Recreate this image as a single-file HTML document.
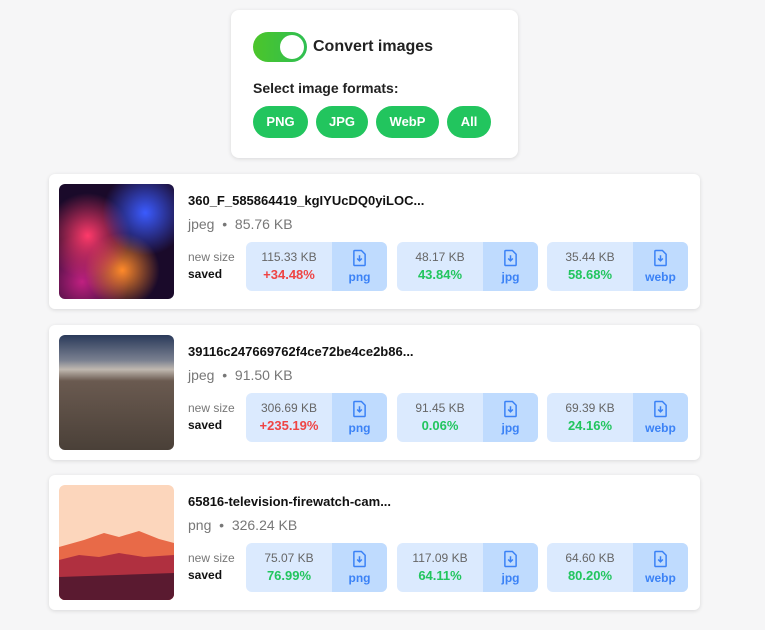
<!DOCTYPE html>
<html><head><style>
*{box-sizing:border-box;margin:0;padding:0}
body{width:765px;height:630px;background:#f6f6f7;font-family:"Liberation Sans",Arial,sans-serif;position:relative;overflow:hidden}
.panel{position:absolute;left:231px;top:10px;width:287px;height:148px;background:#fff;border-radius:8px;box-shadow:0 1px 4px rgba(0,0,0,.12)}
.tog{position:absolute;left:22px;top:22px;width:54px;height:30px;border-radius:15px;background:linear-gradient(90deg,#4cc52a,#2fbf52)}
.tog:after{content:"";position:absolute;right:3px;top:3px;width:24px;height:24px;border-radius:50%;background:#fff}
.lbl{position:absolute;left:82px;top:28px;font-size:16px;font-weight:bold;color:#222}
.sel{position:absolute;left:22px;top:70px;font-size:14px;font-weight:bold;color:#222}
.btn{position:absolute;top:96px;height:32px;border-radius:16px;background:#22c55e;color:#fff;font-size:13px;font-weight:bold;text-align:center;line-height:32px}
.card{position:absolute;left:49px;width:651px;height:135px;background:#fff;border-radius:6px;box-shadow:0 1px 4px rgba(0,0,0,.12)}
.img{position:absolute;left:10px;top:10px;width:115px;height:115px;border-radius:6px;overflow:hidden}
.t{position:absolute;left:139px;top:19px;font-size:13px;font-weight:bold;color:#111}
.m{position:absolute;left:139px;top:42px;font-size:14px;color:#777}
.ns{position:absolute;left:139px;top:76px;font-size:12px;color:#777}
.sv{position:absolute;left:139px;top:93px;font-size:12px;font-weight:bold;color:#111}
.box{position:absolute;top:68px;width:141px;height:49px;border-radius:6px;background:#dbeafe;overflow:hidden}
.box .a{position:absolute;left:0;top:8px;width:86px;text-align:center;font-size:12px;color:#666}
.box .b{position:absolute;left:0;top:25px;width:86px;text-align:center;font-size:13px;font-weight:bold}
.box .r{position:absolute;left:86px;top:0;width:55px;height:49px;background:#bfdbfe;text-align:center}
.box .r svg{position:absolute;left:20px;top:7px}
.box .r span{position:absolute;left:0;width:55px;top:28px;font-size:12px;font-weight:bold;color:#3b82f6}
.g{color:#22c55e}.red{color:#ef4444}
</style></head><body>
<div class="panel"><div class="tog"></div><div class="lbl">Convert images</div><div class="sel">Select image formats:</div>
<div class="btn" style="left:22px;width:55px">PNG</div><div class="btn" style="left:85px;width:52px">JPG</div><div class="btn" style="left:145px;width:63px">WebP</div><div class="btn" style="left:216px;width:44px">All</div></div>

<svg width="0" height="0" style="position:absolute"><defs><symbol id="ic" viewBox="0 0 16 18"><path d="M3 1h7l4 4v11a1 1 0 0 1-1 1H3a1 1 0 0 1-1-1V2a1 1 0 0 1 1-1z" fill="none" stroke="#3b82f6" stroke-width="1.6"/><path d="M8 6v6M5.5 9.5L8 12l2.5-2.5" fill="none" stroke="#3b82f6" stroke-width="1.6"/></symbol></defs></svg>

<div class="card" style="top:174px"><div class="img" style="background:radial-gradient(circle at 75% 25%,#3b5bff,transparent 35%),radial-gradient(circle at 25% 45%,#ff3a6a,transparent 40%),radial-gradient(circle at 55% 75%,#ff8a2a,transparent 35%),radial-gradient(circle at 20% 85%,#c02080,transparent 35%),#1a0a2a"></div>
<div class="t">360_F_585864419_kgIYUcDQ0yiLOC...</div><div class="m">jpeg &nbsp;•&nbsp; 85.76 KB</div><div class="ns">new size</div><div class="sv">saved</div>
<div class="box" style="left:197px"><div class="a">115.33 KB</div><div class="b red">+34.48%</div><div class="r"><svg width="15" height="18"><use href="#ic"/></svg><span>png</span></div></div>
<div class="box" style="left:348px"><div class="a">48.17 KB</div><div class="b g">43.84%</div><div class="r"><svg width="15" height="18"><use href="#ic"/></svg><span>jpg</span></div></div>
<div class="box" style="left:498px"><div class="a">35.44 KB</div><div class="b g">58.68%</div><div class="r"><svg width="15" height="18"><use href="#ic"/></svg><span>webp</span></div></div></div>

<div class="card" style="top:325px"><div class="img" style="background:linear-gradient(180deg,#2a3a5a 0%,#7a8090 22%,#c0b8b0 30%,#6a5a50 40%,#4a4038 100%)"></div>
<div class="t">39116c247669762f4ce72be4ce2b86...</div><div class="m">jpeg &nbsp;•&nbsp; 91.50 KB</div><div class="ns">new size</div><div class="sv">saved</div>
<div class="box" style="left:197px"><div class="a">306.69 KB</div><div class="b red">+235.19%</div><div class="r"><svg width="15" height="18"><use href="#ic"/></svg><span>png</span></div></div>
<div class="box" style="left:348px"><div class="a">91.45 KB</div><div class="b g">0.06%</div><div class="r"><svg width="15" height="18"><use href="#ic"/></svg><span>jpg</span></div></div>
<div class="box" style="left:498px"><div class="a">69.39 KB</div><div class="b g">24.16%</div><div class="r"><svg width="15" height="18"><use href="#ic"/></svg><span>webp</span></div></div></div>

<div class="card" style="top:475px"><div class="img" style="background:#fcd6bc"><svg width="115" height="115" style="position:absolute;left:0;top:0"><path d="M0 62L25 55L45 48L60 52L80 46L100 54L115 58V115H0z" fill="#e86a48"/><path d="M0 75L20 70L40 72L60 68L85 72L115 70V115H0z" fill="#b03040"/><path d="M0 92L115 88V115H0z" fill="#5a1a30"/></svg></div>
<div class="t">65816-television-firewatch-cam...</div><div class="m">png &nbsp;•&nbsp; 326.24 KB</div><div class="ns">new size</div><div class="sv">saved</div>
<div class="box" style="left:197px"><div class="a">75.07 KB</div><div class="b g">76.99%</div><div class="r"><svg width="15" height="18"><use href="#ic"/></svg><span>png</span></div></div>
<div class="box" style="left:348px"><div class="a">117.09 KB</div><div class="b g">64.11%</div><div class="r"><svg width="15" height="18"><use href="#ic"/></svg><span>jpg</span></div></div>
<div class="box" style="left:498px"><div class="a">64.60 KB</div><div class="b g">80.20%</div><div class="r"><svg width="15" height="18"><use href="#ic"/></svg><span>webp</span></div></div></div>
</body></html>
